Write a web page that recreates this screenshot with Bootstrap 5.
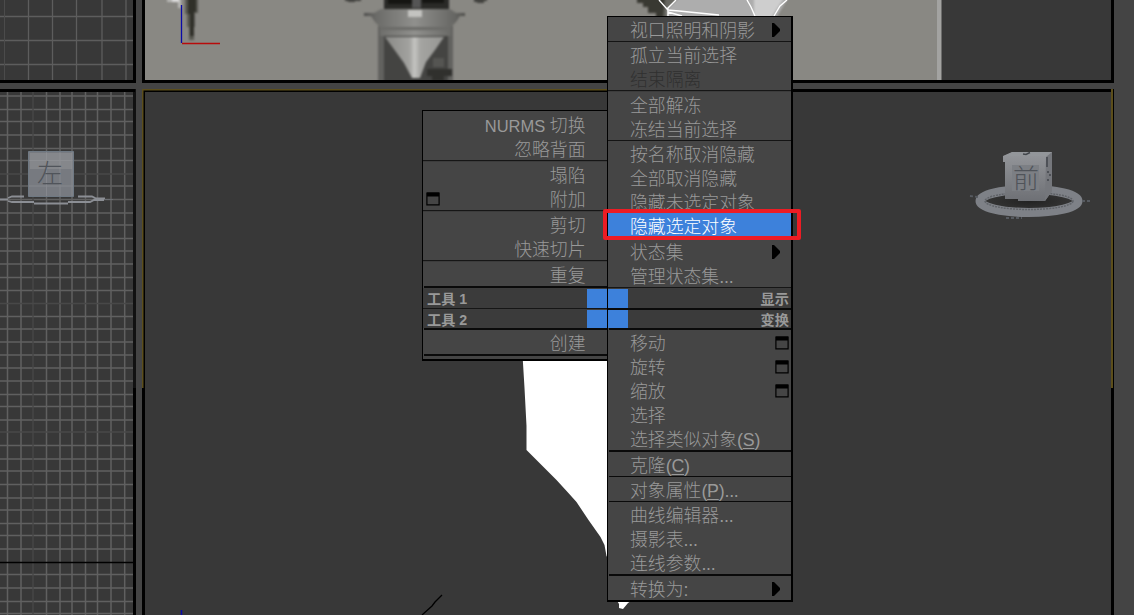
<!DOCTYPE html>
<html lang="zh-CN">
<head>
<meta charset="utf-8">
<meta name="viewport" content="width=device-width, initial-scale=1">
<title>视口</title>
<link rel="stylesheet" href="https://cdn.jsdelivr.net/npm/bootstrap@5.3.0/dist/css/bootstrap.min.css">
<style>
body{background:#444;font-family:"Liberation Sans","Noto Sans CJK SC",sans-serif;color:#999}
.stage{display:grid;width:1134px;height:615px;grid-template-columns:136px 972px;grid-template-rows:83px 526px;gap:6px}
.stage svg{display:block}
.quad{left:422px;top:16px}
.pane{background:#454545;border:solid #000}
.pane-l{width:185px;margin-top:94px;height:251px;border-width:1px 0 2px 1px;padding-top:1px}
.pane-r{width:186px;height:586px;border-width:1px 2px 2px 1px}
.item{height:24px;line-height:24px;font-size:17.85px;font-weight:300;padding:2px 10px 0 22px;white-space:nowrap;color:#999}
.item svg{flex:none;margin-top:4px}
.pane-l .item{padding:2px 21.5px 0 3px}
.item.has-box{padding-right:2px}
.latin{font-size:16.5px}
.dots{letter-spacing:-.25px}
.off{color:#303030}
.on{background:#3d81db;color:#fff}
.after-on{margin-top:2px}
.rule{height:1px;background:#141414}
.rule2{height:2px;border-top:1px solid #161616;background:#3c3c3c}
.rule3{height:2px;background:#0a0a0a;margin-left:1px}
.thin{height:1px}
.head{background:#3b3b3b;font-size:14.2px;line-height:21px;font-weight:700;color:#999}
.head-a{height:19px}.head-b{height:18px}
.head .end{margin-right:2px}
.sq{width:20px;background:#3d81db}
.mark-box{left:603px;top:209px;width:198px;height:31px;border:4px solid #ed1c24;border-radius:2px}
u{text-underline-offset:2px;text-decoration-thickness:1px}
.soft{filter:blur(.8px)}
</style>
<script src="https://cdn.jsdelivr.net/npm/bootstrap@5.3.0/dist/js/bootstrap.bundle.min.js"></script>
</head>
<body class="m-0 overflow-hidden position-relative">
<svg class="d-none">
<symbol id="arrow" viewBox="0 0 9 14"><path d="M0 0h2l6 6v2l-6 6H0z"/></symbol>
<symbol id="win" viewBox="0 0 14 14"><path fill-rule="evenodd" d="M.3 1Q.3.3 1 .3h12q.7 0 .7.7v12.600H.3zM1.500 4.500v7.800h11V4.500z"/></symbol>
</svg>
<main class="stage">
<svg width="136" height="83" viewBox="0 0 136 83">
<path fill="#000" d="M0 0h136v83H0z"/><path fill="#383838" d="M0 0h133v80H0z"/>
<path stroke="#5d5d5d" stroke-width="1.300" d="M28.500 0v80M52.500 0v80M76.500 0v80M102 0v80M126 0v80M0 16.500h133M0 40.500h133M0 64.500h133"/><path stroke="#4b4b4b" d="M4.500 0v80"/>
</svg>
<svg width="972" height="83" viewBox="142 0 972 83">
<defs><linearGradient id="pipe"><stop stop-color="#4d4d4b"/><stop offset=".12" stop-color="#6b6b68"/><stop offset=".5" stop-color="#90908d"/><stop offset=".9" stop-color="#666663"/><stop offset="1" stop-color="#4e4e4a"/></linearGradient>
<linearGradient id="tip"><stop stop-color="#8a8a87"/><stop offset=".42" stop-color="#a3a3a0"/><stop offset=".5" stop-color="#c4c4c1"/><stop offset=".6" stop-color="#a4a4a1"/><stop offset="1" stop-color="#969693"/></linearGradient>
<clipPath id="view"><path d="M145 0h966v80H145z"/></clipPath></defs>
<path fill="#000" d="M142 0h972v83H142z"/><path fill="#383838" d="M145 0h966v80H145z"/>
<path fill="#898883" d="M145 0h792v80H145z"/><path fill="#a3a3a1" d="M937 0h4.500v80H937z"/>
<g clip-path="url(#view)"><g class="soft">
<path fill="#b9b9b6" d="M167-1h14v9h-3V2h-11z"/><path fill="#ddd" d="M172-2h7v4h-7z"/>
<path fill="#585851" d="M185-2h13v15h-3v14h-1v13h-5V27h-2V14h-2z"/><path fill="#303029" d="M188-2h8v14h-2v24h-4V14h-2z"/>
<path fill="#42423e" d="M345-4h16v5h-6v1h-7V1h-3zM474-4h13v5h-3v2h-7V2h-3z"/>
<path fill="#62625f" d="M378 26h75v58h-75z"/><path fill="#444442" d="M384 36h64v48h-64z"/>
<path fill="#2a2a27" d="M384-2h65v12h-65z"/><path fill="#151512" d="M388-2h24v6h-24zM422-2h22v5h-22z"/><path fill="#555" d="M412-2h9v10h-9z"/>
<path fill="url(#pipe)" d="M381 9h69l6 4h9v3h-5l-4 6-5 5v9h-71v-9l-5-5-4-6h-7v-3h10z"/>
<path fill="#6b6b68" d="M381 27h69v3h-69z"/><path fill="#c3c3c0" d="M408 10h14v7h-14z"/>
<path fill="url(#tip)" d="M385 37h59l-9 13-9 12-6 16h-8l-8-15-8-11z"/>
<path fill="#30302d" d="M427 69h25v7h-8v5h-12v-5h-5z"/><path fill="#555552" d="M433 58h11v9h-11z"/>
</g>
<path stroke="#0a0aa8" stroke-width="1.300" d="M181.500 5v38"/><path stroke="#b80b0b" stroke-width="1.300" d="M182 43.500h38"/>
<g class="soft"><path fill="#393932" d="M637-2h45v20h-26v-5h-8V7h-5V3h-6z"/><path fill="#666660" d="M665-2h15v20h-17z"/>
<path fill="#adadad" d="M678-2h110l-12 20H667V9z"/><path fill="#cecece" d="M754-2h30l-13 20h-17z"/></g>
<path fill="none" stroke="#fff" stroke-width="1.400" d="M659 0l8 9 9-9M668 8v8M667 10l12 1 40 4M668 12l14 4M747 0l4 7 4 9M787 0l-7 6-6 10"/>
</g>
</svg>
<svg width="136" height="526" viewBox="0 89 136 526">
<path fill="#111" d="M0 89h136v526H0z"/><path fill="#000" d="M0 89h135v3H0zM133 388h3v227h-3z"/><path fill="#383838" d="M0 92h133v523H0z"/>
<path stroke="#606060" stroke-width="1.500" d="M7.500 92v523M21 92v523M46.500 92v523M60 92v523M72 92v523M85.500 92v523M97.500 92v523M111 92v523M124.700 92v523M0 96h133M0 109.500h133M0 121.500h133M0 135h133M0 148.500h133M0 160.500h133M0 186h133M0 199.500h133M0 213h133M0 225h133M0 238.500h133M0 251h133M0 264h133M0 277.500h133M0 290.500h133M0 316.500h133M0 329h133M0 342h133M0 355h133M0 368h133M0 381h133M0 394.500h133M0 406.500h133M0 420h133M0 445.500h133M0 459h133M0 471h133M0 484.500h133M0 498h133M0 510h133M0 523.500h133M0 535.500h133M0 549h133M0 574.500h133M0 588h133M0 601.500h133M0 613.500h133"/>
<path stroke="#484848" stroke-width="1.400" d="M33 92v523M0 174h133M0 303.500h133M0 432h133"/><path stroke="#000" stroke-width="1.400" d="M0 562.500h133"/>
<path fill="none" stroke="#8b8e94" stroke-width="1.800" d="M0 199.500h8M8 198l4-1.500h12M8 201l4 1h22M34 203.500h34M68 202h22l4-2h10M78 196.500h14l4 2h9"/><path stroke="#6a6d72" d="M104 199.500h9"/>
<path fill="#777a80" stroke="#6f7983" d="M28.500 151.500h45v45h-45z"/><path fill="#85878b" d="M30 153h42v16H30z"/>
<path stroke="#9a9ca1" opacity=".4" d="M46.500 152v44M60 152v44M72 152v44M29 160.500h44M29 186h44"/>
<text x="37" y="183" font-size="26" font-weight="300" fill="#50545a">左</text>
</svg>
<svg width="972" height="526" viewBox="142 89 972 526">
<defs><linearGradient id="cube" x2="0" y2="1"><stop stop-color="#95979b"/><stop offset="1" stop-color="#6e7075"/></linearGradient>
<radialGradient id="shade"><stop stop-color="#222"/><stop offset="1" stop-color="#373737"/></radialGradient></defs>
<path fill="#000" d="M142 89h972v526H142z"/><path fill="#5c4e1b" d="M142 89h466v1.500H143.500V388H142zM1111 89h2v299h-2z"/><path fill="#383838" d="M145 92h966v523H145z"/>
<path fill="#fff" d="M522.500 355h90v210l-6-9-2-11-4-8-12-17-12-18-9-10-11-12-30-30v-24l-2-38z"/>
<path fill="#fff" d="M616 599h18l-6 4-5 6-4-1v-4z"/>
<path fill="none" stroke="#000" stroke-width="1.300" d="M422 615l10-9 3-4 7-7"/><path stroke="#0a0aa8" stroke-width="1.500" d="M181.500 610v5"/>
<ellipse cx="1029" cy="201" rx="49" ry="11.500" fill="url(#shade)" stroke="#7e8187" stroke-width="9"/><ellipse cx="1029" cy="201" rx="44" ry="8.500" fill="none" stroke="#606368" stroke-width="1.500" stroke-dasharray="2 1"/>
<path stroke="#565a60" stroke-width="2" stroke-dasharray="3 2" d="M970 196l8 1M1082 201h8M1006 218h16"/>
<path fill="url(#cube)" d="M1003 156l9-4h40v39l-7 10h-27v-2h-13v-37h-2z"/><path fill="#75777c" d="M1046 157l6-5v39l-7 10z"/><path fill="#93969a" d="M1004 156l9-4h38l-5 4z"/>
<path fill="#7c7f84" d="M1012 165h27v26h-27z"/>
<text x="1013" y="188" font-size="26" font-weight="300" fill="#50545a">前</text>
<path fill="none" stroke="#42464b" d="M1023 154l3 .5 4-2M1047 157v10M1048 171v2M1050 174v2M1048 179v2" stroke-width="1.500"/>
</svg>
</main>

<div class="quad position-absolute d-flex align-items-start">
<div class="pane pane-l text-end">
<div class="item"><span class="latin">NURMS </span>切换</div>
<div class="item">忽略背面</div><div class="rule2"></div>
<div class="item">塌陷</div>
<div class="item d-flex justify-content-between align-items-start"><svg width="14" height="14"><use href="#win"/></svg>附加</div><div class="rule2"></div>
<div class="item">剪切</div><div class="item">快速切片</div><div class="rule2"></div>
<div class="item">重复</div><div class="rule3"></div><div class="rule2 thin border-0"></div>
<div class="head head-a d-flex justify-content-between ps-1"><span>工具 1</span><span class="sq"></span></div><div class="rule2"></div>
<div class="head head-b d-flex justify-content-between ps-1"><span>工具 2</span><span class="sq"></span></div><div class="rule3"></div>
<div class="item">创建</div><div class="rule3"></div>
</div>
<div class="pane pane-r">
<div class="item d-flex justify-content-between align-items-start">视口照明和阴影<svg width="9" height="14"><use href="#arrow"/></svg></div><div class="rule"></div>
<div class="item">孤立当前选择</div><div class="item off">结束隔离</div><div class="rule2"></div>
<div class="item">全部解冻</div><div class="item">冻结当前选择</div><div class="rule"></div>
<div class="item">按名称取消隐藏</div><div class="item">全部取消隐藏</div><div class="item">隐藏未选定对象</div>
<div class="item on">隐藏选定对象</div>
<div class="item after-on d-flex justify-content-between align-items-start">状态集<svg width="9" height="14"><use href="#arrow"/></svg></div>
<div class="item">管理状态集<span class="dots">...</span></div><div class="rule2"></div>
<div class="head head-a d-flex justify-content-between"><span class="sq"></span><span class="end">显示</span></div><div class="rule3 ms-0"></div>
<div class="head head-b d-flex justify-content-between"><span class="sq"></span><span class="end">变换</span></div><div class="rule3"></div>
<div class="item has-box d-flex justify-content-between align-items-start">移动<svg width="14" height="14"><use href="#win"/></svg></div>
<div class="item has-box d-flex justify-content-between align-items-start">旋转<svg width="14" height="14"><use href="#win"/></svg></div>
<div class="item has-box d-flex justify-content-between align-items-start">缩放<svg width="14" height="14"><use href="#win"/></svg></div>
<div class="item">选择</div><div class="item">选择类似对象<span class="dots">(<u>S</u>)</span></div><div class="rule3"></div>
<div class="item">克隆<span class="dots">(<u>C</u>)</span></div><div class="rule3 thin"></div>
<div class="item">对象属性<span class="dots">(<u>P</u>)...</span></div><div class="rule3 thin"></div>
<div class="item">曲线编辑器<span class="dots">...</span></div><div class="item">摄影表<span class="dots">...</span></div><div class="item">连线参数<span class="dots">...</span></div><div class="rule3"></div>
<div class="item d-flex justify-content-between align-items-start">转换为:<svg width="9" height="14"><use href="#arrow"/></svg></div>
</div>
</div>
<div class="mark-box position-absolute"></div>
</body>
</html>
